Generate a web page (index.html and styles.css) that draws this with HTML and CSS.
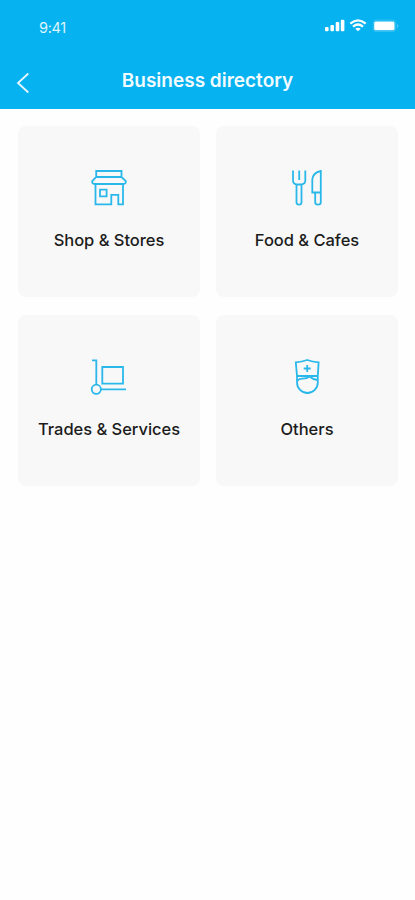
FILE: index.html
```html
<!DOCTYPE html>
<html lang="en">
<head>
<meta charset="utf-8">
<title>Business directory</title>
<link rel="stylesheet" href="styles.css">
</head>
<body>
<header class="header">
  <div class="status">
    <span class="time">9:41</span>
    <svg class="indicators" width="76" height="16" viewBox="0 0 76 16" fill="#fff">
      <rect x="1" y="9" width="3.6" height="4.3" rx="1"/>
      <rect x="6.4" y="7" width="3.6" height="6.3" rx="1"/>
      <rect x="11.7" y="4" width="3.6" height="9.3" rx="1"/>
      <rect x="16.8" y="1.7" width="3.6" height="11.6" rx="1"/>
      <g fill="none" stroke="#fff" stroke-width="2.2"><path d="M26.3 5.6Q34 -1 41.7 5.6M29 8.6Q34 4.4 39 8.6"/></g>
      <path d="M31.3 10.7Q34 8.8 36.7 10.7L34 13.3Z"/>
      <rect x="49.2" y="2.1" width="22.5" height="11.5" rx="3" fill="none" stroke="#fff" stroke-opacity=".2"/>
      <rect x="50.2" y="3.5" width="20.3" height="8.8" rx="1.5"/>
      <path d="M73 6Q76 8 73 10Z" opacity=".3"/>
    </svg>
  </div>
  <div class="titlebar">
    <svg class="back" width="16" height="24" viewBox="0 0 16 24"><path d="M12.3 2.5L2 12L12.3 21.5"/></svg>
    <h1 class="title">Business directory</h1>
  </div>
</header>
<main class="grid">
  <a class="card">
    <svg class="icon" viewBox="0 0 40 40"><path d="M7.2 9V3H32.5V9M7.2 9H32.5L36.8 13.2Q37 16 34.5 16H5.5Q3 16 3.2 13.2ZM6.5 16V36.3H22.3V26.8H29.3V36.3H34V16M11 21.7H17.6V28.3H11Z"/></svg>
    <span class="label">Shop &amp; Stores</span>
  </a>
  <a class="card">
    <svg class="icon" viewBox="0 0 40 40"><path d="M6 2.5V12.5Q6 15.8 9.5 16.5V34.3Q9.5 36.7 12 36.7T14.5 34.3V16.5Q18.3 15.8 18.3 12.5V2.5M9.5 16.5H14.5M12.2 2.5V12M33.8 3V34.3Q33.8 36.7 31 36.7T28.2 34.3V24.5H25.3V11.5Q25.8 4.8 33.8 3ZM28.2 24.5H33.8"/></svg>
    <span class="label">Food &amp; Cafes</span>
  </a>
  <a class="card">
    <svg class="icon" viewBox="0 0 40 40"><path d="M3 3.3H7.3V27.7M13.3 10H34V26.7H13.3ZM12 32.3H37"/><circle cx="7.3" cy="32.3" r="4.6"/></svg>
    <span class="label">Trades &amp; Services</span>
  </a>
  <a class="card">
    <svg class="icon" viewBox="0 0 40 40"><path d="M8.8 5.3Q15 5 20.2 3Q25.4 5 31.6 5.3L30.8 19V25.5A10.4 10.5 0 0 1 10 25.5V19ZM9.8 19H31M10.2 24Q12 21.5 15.5 21.7Q20 21.7 22.5 19.5Q26 22.5 30.5 23M20.2 8V15M16.7 11.5H23.7"/></svg>
    <span class="label">Others</span>
  </a>
</main>
</body>
</html>
```
FILE: styles.css
```css
* { box-sizing: border-box; }
body {
  margin: 0;
  min-height: 900px;
  background: #fefefe;
  font-family: Inter, "Liberation Sans", sans-serif;
}
.header {
  height: 109px;
  background: #06b2ef;
  color: #fff;
}
.status {
  display: flex;
  justify-content: space-between;
  align-items: flex-start;
  height: 60px;
  padding: 18px 15px 0 39px;
}
.time {
  color: #dff5fd;
  font-size: 14.5px;
  line-height: 20px;
  letter-spacing: -0.3px;
}
.titlebar {
  display: grid;
  grid-template-columns: 16px 1fr 16px;
  align-items: center;
  height: 42px;
  padding: 0 16px;
}
.back {
  margin-top: 4px;
  fill: none;
  stroke: #e6f7fe;
  stroke-width: 1.8;
}
.title {
  margin: 0;
  text-align: center;
  font-size: 19px;
  line-height: 24px;
  font-weight: 600;
  color: #f2fbff;
}
.grid {
  display: grid;
  grid-template-columns: 182px 182px;
  grid-auto-rows: 171px;
  gap: 18px 16px;
  padding: 17px 17px 0 18px;
}
.card {
  display: flex;
  flex-direction: column;
  align-items: center;
  padding-top: 42px;
  border-radius: 8px;
  background: #f8f8f8;
}
.icon {
  width: 40px;
  height: 40px;
  fill: none;
  stroke: #2ab8ea;
  stroke-width: 1.8;
}
.label {
  margin-top: 20px;
  color: #1c1c1c;
  font-size: 16.5px;
  line-height: 24px;
  font-weight: 500;
  letter-spacing: -0.03px;
  white-space: nowrap;
}
```
